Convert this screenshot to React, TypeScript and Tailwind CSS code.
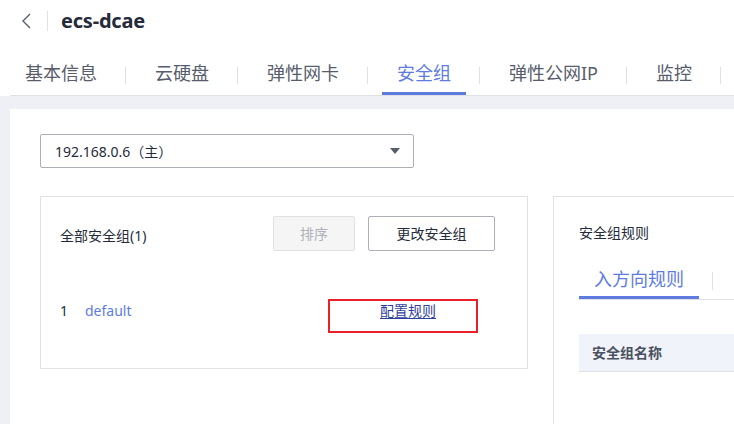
import React from 'react';

const tabs = ['基本信息', '云硬盘', '弹性网卡', '安全组', '弹性公网IP', '监控'];

const Sep = ({ h = 'h-[17px]' }: { h?: string }) => (
  <span className={`ml-[13px] mr-[14px] w-px ${h} bg-[#dfe1e6] self-center shrink-0`} />
);

const App: React.FC = () => {
  return (
    <div
      className="w-[734px] h-[424px] overflow-hidden bg-white text-[#252b3a]"
      style={{ fontFamily: '"Noto Sans", "Noto Sans CJK SC", sans-serif' }}
    >
      {/* page header */}
      <div className="h-[42px] flex items-center pl-[20px]">
        <svg width="14" height="18" viewBox="0 0 14 18" className="text-[#575d6c]">
          <path d="M10 2 L3 9 L10 16" fill="none" stroke="currentColor" strokeWidth="1.4" />
        </svg>
        <span className="ml-[13px] w-px h-[20px] bg-[#dfe1e6]" />
        <h1 className="ml-[13px] text-[20px] font-bold tracking-[-0.2px]">ecs-dcae</h1>
      </div>

      <div className="mt-[13px] ml-[10px] flex border-b border-[#dfe1e6] whitespace-nowrap">
        {tabs.map((t, i) => (
          <React.Fragment key={t}>
            {i > 0 && <Sep />}
            <div
              className={`h-[40px] px-[15px] flex items-center text-[18px] border-b-[3px] ${
                t === '安全组' ? 'border-[#5e7ce0] text-[#5e7ce0]' : 'border-transparent text-[#575d6c]'
              }`}
            >
              {t}
            </div>
          </React.Fragment>
        ))}
        <Sep />
      </div>

      {/* content */}
      <div className="bg-[#eef0f5] pt-[13px] pl-[10px]">
        <div className="bg-white pl-[30px] pt-[25px] h-[400px] overflow-hidden">
          <div className="w-[374px] h-[34px] border border-[#adb0b8] rounded-[2px] flex items-center pl-[14px] pr-[13px] text-[14px]">
            <span>192.168.0.6（主）</span>
            <span className="ml-auto w-0 h-0 border-l-[5px] border-r-[5px] border-t-[6px] border-l-transparent border-r-transparent border-t-[#575d6c]" />
          </div>

          <div className="mt-[28px] flex gap-[25px]">
            {/* left card */}
            <div className="w-[488px] h-[173px] shrink-0 border border-[#dfe1e6] pl-[19px] pr-[32px] pt-[19px]">
              <div className="flex items-center">
                <span className="text-[14px] mt-[4px]">全部安全组(1)</span>
                <div className="ml-auto flex gap-[13px]">
                  <button className="w-[82px] h-[35px] rounded-[2px] border border-[#dfe1e6] bg-[#f5f5f6] text-[14px] text-[#adb0b8]">
                    排序
                  </button>
                  <button className="w-[127px] h-[35px] rounded-[2px] border border-[#adb0b8] bg-white text-[14px] text-[#252b3a]">
                    更改安全组
                  </button>
                </div>
              </div>
              <div className="relative mt-[49px] h-[20px] flex items-center text-[14px] whitespace-nowrap">
                <span className="w-[25px] shrink-0">1</span>
                <span className="w-[295px] shrink-0 text-[#5e7ce0]">default</span>
                <a className="text-[#2f41a0] underline underline-offset-2 cursor-pointer">配置规则</a>
                <span className="absolute left-[268px] top-[-1px] w-[150px] h-[34px] border-2 border-[#e8202a]" />
              </div>
            </div>

            {/* right card */}
            <div className="w-[300px] h-[240px] shrink-0 border border-[#dfe1e6] pl-[25px] pt-[26px]">
              <div className="text-[14px] leading-[20px]">安全组规则</div>
              <div className="mt-[19px] flex border-b border-[#dfe1e6] whitespace-nowrap">
                <div className="h-[37px] px-[15px] flex items-center text-[18px] text-[#5e7ce0] border-b-[3px] border-[#5e7ce0]">
                  入方向规则
                </div>
                <Sep h="h-[18px]" />
              </div>
              <div className="mt-[34px] h-[38px] bg-[#f0f3fa] border-b border-[#dfe1e6] flex items-center pl-[13px] text-[14px] font-bold text-[#4a5060]">
                安全组名称
              </div>
            </div>
          </div>
        </div>
      </div>
    </div>
  );
};

export default App;
